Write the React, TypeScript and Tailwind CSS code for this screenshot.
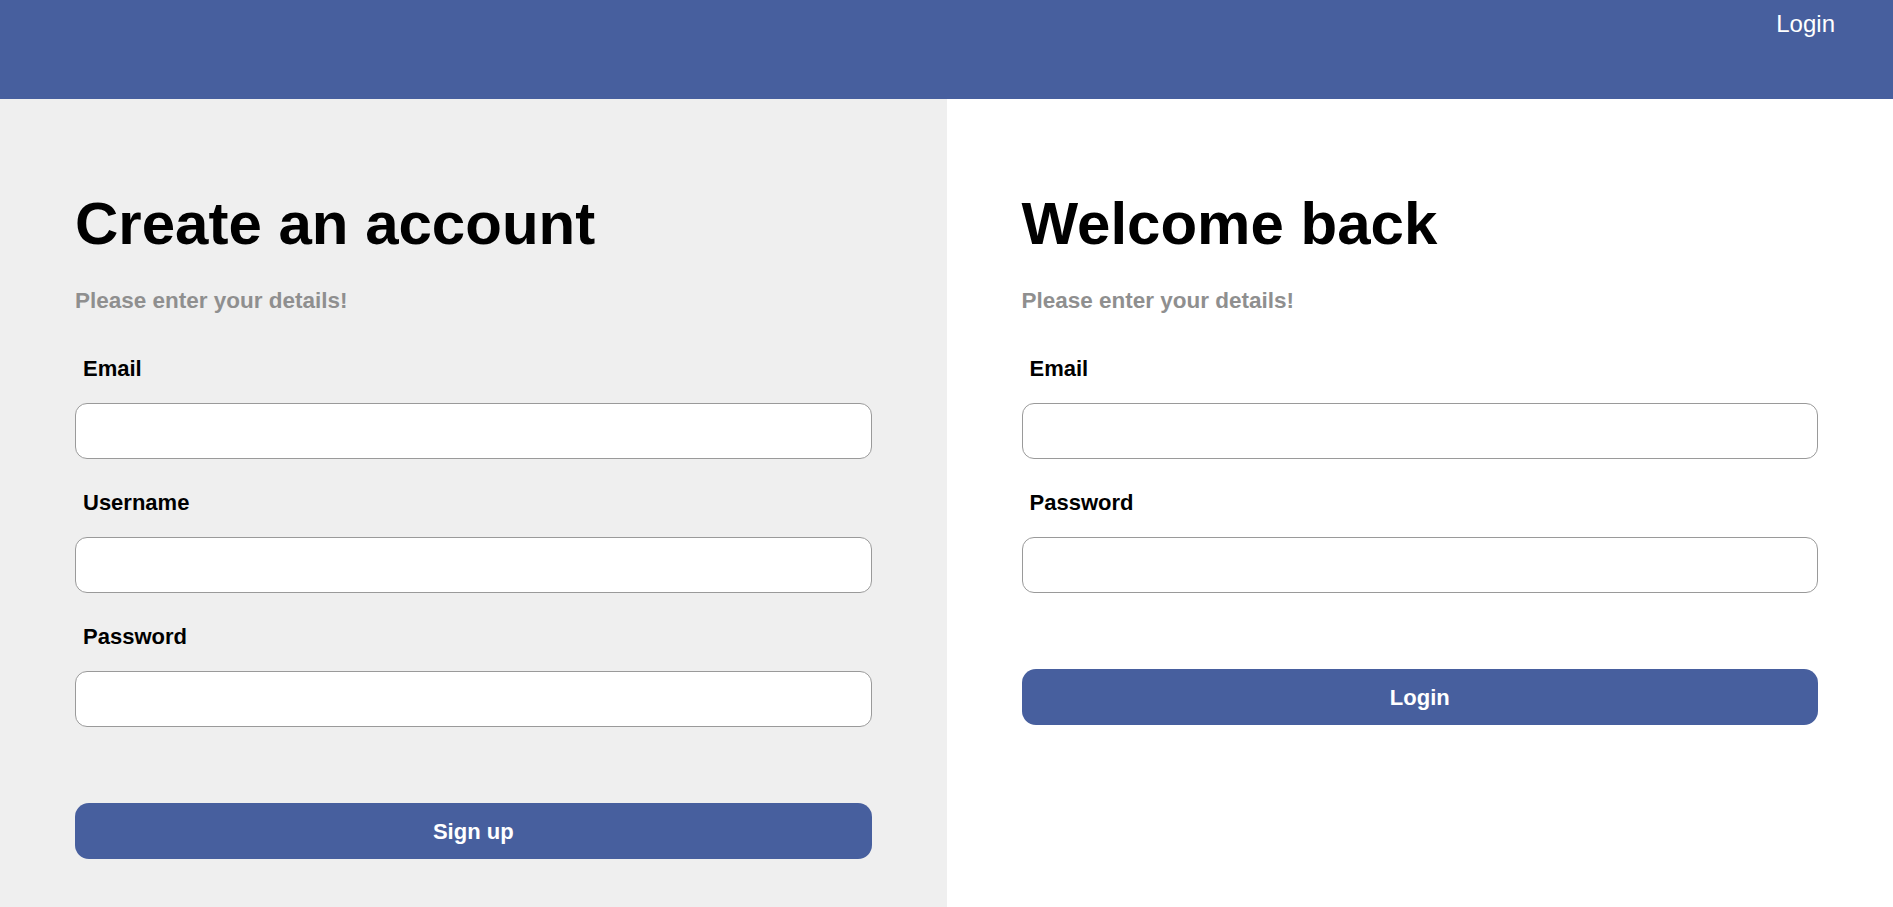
import { useState } from "react"

function Field({ label, type = "text" }: { label: string; type?: string }) {
  const [value, setValue] = useState("")
  return (
    <div className="flex flex-col">
      <label className="ml-2 text-[22px] leading-[22px] font-bold text-black">{label}</label>
      <input
        type={type}
        value={value}
        onChange={(e) => setValue(e.target.value)}
        className="mt-[23px] h-[56px] w-full rounded-[12px] border border-[#9a9a9a] bg-white px-4 text-[18px] outline-none"
      />
    </div>
  )
}

export default function App() {
  return (
    <div className="flex h-[907px] flex-col overflow-hidden font-['Liberation_Sans',Arial,sans-serif]">
      {/* Top bar */}
      <header className="flex h-[99px] shrink-0 justify-end bg-[#475f9e] pr-[58px] pt-[12px]">
        <a href="#" className="text-[24px] leading-[24px] text-white">Login</a>
      </header>

      <main className="grid flex-1 grid-cols-2">
        {/* Sign up */}
        <section className="bg-[#efefef] px-[75px] pt-[95px]">
          <h1 className="text-[60px] leading-[60px] font-bold text-black">Create an account</h1>
          <p className="mt-[36px] text-[22.5px] leading-[22px] font-bold text-[#8f8f8f]">Please enter your details!</p>
          <form className="mt-[46px] flex flex-col gap-[33px]" onSubmit={(e) => e.preventDefault()}>
            <Field label="Email" type="email" />
            <Field label="Username" />
            <Field label="Password" type="password" />
            <button className="mt-[43px] h-[56px] w-full rounded-[14px] bg-[#475f9e] text-[22px] font-bold text-white">
              Sign up
            </button>
          </form>
        </section>

        {/* Login */}
        <section className="bg-white px-[75px] pt-[95px]">
          <h1 className="text-[60px] leading-[60px] font-bold text-black">Welcome back</h1>
          <p className="mt-[36px] text-[22.5px] leading-[22px] font-bold text-[#8f8f8f]">Please enter your details!</p>
          <form className="mt-[46px] flex flex-col gap-[33px]" onSubmit={(e) => e.preventDefault()}>
            <Field label="Email" type="email" />
            <Field label="Password" type="password" />
            <button className="mt-[43px] h-[56px] w-full rounded-[14px] bg-[#475f9e] text-[22px] font-bold text-white">
              Login
            </button>
          </form>
        </section>
      </main>
    </div>
  )
}
